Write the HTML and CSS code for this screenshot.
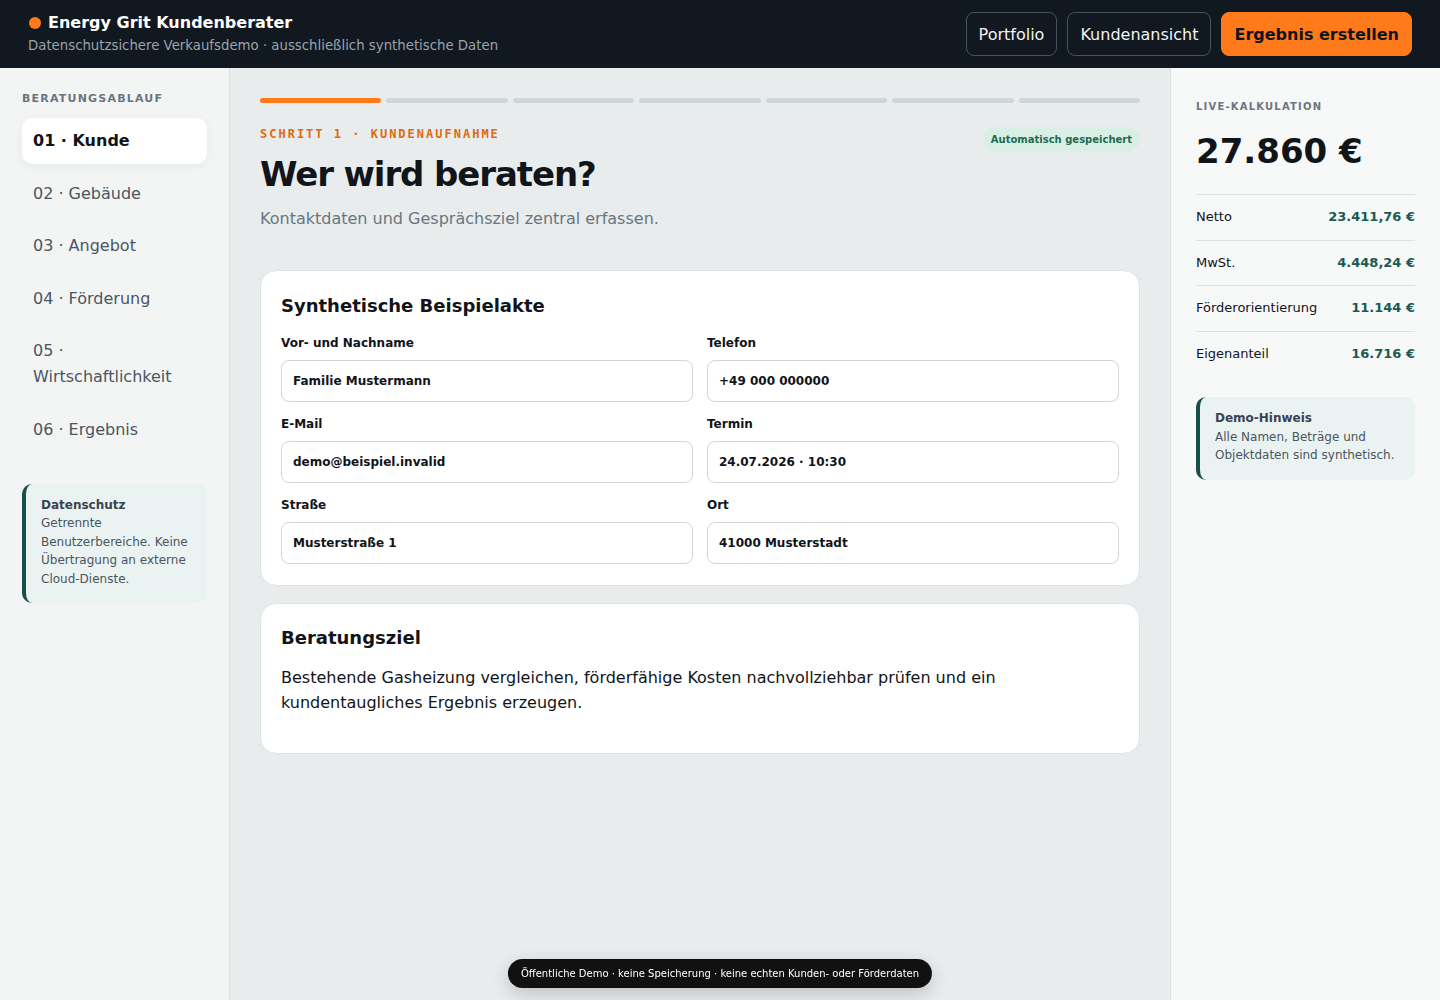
FILE: index.html
```html
<!DOCTYPE html>
<html lang="de">
<head>
<meta charset="utf-8">
<title>Energy Grit Kundenberater</title>
<link rel="stylesheet" href="styles.css">
</head>
<body>
<header class="topbar">
  <div class="brand">
    <div class="brand-title"><span class="dot"></span>Energy Grit Kundenberater</div>
    <div class="brand-sub">Datenschutzsichere Verkaufsdemo · ausschließlich synthetische Daten</div>
  </div>
  <nav class="top-actions">
    <button class="btn btn-ghost">Portfolio</button>
    <button class="btn btn-ghost">Kundenansicht</button>
    <button class="btn btn-primary">Ergebnis erstellen</button>
  </nav>
</header>
<div class="layout">
  <aside class="sidebar">
    <div class="eyebrow">BERATUNGSABLAUF</div>
    <ul class="steps">
      <li class="step active">01 · Kunde</li>
      <li class="step">02 · Gebäude</li>
      <li class="step">03 · Angebot</li>
      <li class="step">04 · Förderung</li>
      <li class="step">05 · Wirtschaftlichkeit</li>
      <li class="step">06 · Ergebnis</li>
    </ul>
    <div class="note">
      <strong>Datenschutz</strong>
      <span>Getrennte Benutzerbereiche. Keine Übertragung an externe Cloud-Dienste.</span>
    </div>
  </aside>
  <main class="main">
    <div class="progress">
      <span class="seg on"></span><span class="seg"></span><span class="seg"></span><span class="seg"></span><span class="seg"></span><span class="seg"></span><span class="seg"></span>
    </div>
    <div class="page-head">
      <div>
        <div class="kicker">SCHRITT 1 · KUNDENAUFNAHME</div>
        <h1>Wer wird beraten?</h1>
        <p class="lead">Kontaktdaten und Gesprächsziel zentral erfassen.</p>
      </div>
      <span class="badge">Automatisch gespeichert</span>
    </div>
    <section class="card card-form">
      <h2>Synthetische Beispielakte</h2>
      <div class="form-grid">
        <label class="field"><span>Vor- und Nachname</span><input value="Familie Mustermann"></label>
        <label class="field"><span>Telefon</span><input value="+49 000 000000"></label>
        <label class="field"><span>E-Mail</span><input value="demo@beispiel.invalid"></label>
        <label class="field"><span>Termin</span><input value="24.07.2026 · 10:30"></label>
        <label class="field"><span>Straße</span><input value="Musterstraße 1"></label>
        <label class="field"><span>Ort</span><input value="41000 Musterstadt"></label>
      </div>
    </section>
    <section class="card">
      <h2>Beratungsziel</h2>
      <p class="goal">Bestehende Gasheizung vergleichen, förderfähige Kosten nachvollziehbar prüfen und ein kundentaugliches Ergebnis erzeugen.</p>
    </section>
  </main>
  <aside class="calc">
    <div class="eyebrow small">LIVE-KALKULATION</div>
    <div class="total">27.860 €</div>
    <dl class="rows">
      <div class="row"><dt>Netto</dt><dd>23.411,76 €</dd></div>
      <div class="row"><dt>MwSt.</dt><dd>4.448,24 €</dd></div>
      <div class="row"><dt>Förderorientierung</dt><dd>11.144 €</dd></div>
      <div class="row"><dt>Eigenanteil</dt><dd>16.716 €</dd></div>
    </dl>
    <div class="note">
      <strong>Demo-Hinweis</strong>
      <span>Alle Namen, Beträge und Objektdaten sind synthetisch.</span>
    </div>
  </aside>
</div>
<div class="toast">Öffentliche Demo · keine Speicherung · keine echten Kunden- oder Förderdaten</div>
</body>
</html>
```

FILE: styles.css
```css
* { box-sizing: border-box; }
html, body { margin: 0; padding: 0; }
body {
  font-family: "DejaVu Sans", Verdana, sans-serif;
  color: #111418;
  background: #e8ecec;
  min-height: 100vh;
}
.topbar {
  height: 68px;
  background: #111820;
  display: flex;
  align-items: center;
  justify-content: space-between;
  padding: 0 28px;
}
.brand-title {
  color: #ffffff;
  font-weight: bold;
  font-size: 16px;
  line-height: 22px;
  display: flex;
  align-items: center;
}
.dot {
  width: 12px;
  height: 12px;
  border-radius: 50%;
  background: #ff7a1a;
  margin: 0 7px 0 1px;
}
.brand-sub {
  color: #9aa3ad;
  font-size: 13.3px;
  line-height: 20px;
  margin-top: 2px;
}
.top-actions { display: flex; gap: 10px; }
.btn {
  font-family: inherit;
  font-size: 16px;
  height: 44px;
  padding: 0 12px;
  border-radius: 8px;
  cursor: pointer;
}
.btn-ghost {
  background: transparent;
  color: #f1f3f5;
  border: 1px solid #48525c;
}
.btn-primary {
  background: #ff7a1a;
  color: #111418;
  border: 1px solid #ff7a1a;
  font-weight: bold;
  padding: 0 12px;
}
.layout {
  display: grid;
  grid-template-columns: 230px 1fr 270px;
  min-height: calc(100vh - 68px);
}
.sidebar {
  background: #f3f5f5;
  border-right: 1px solid #dde2e4;
  padding: 23px 22px 22px 22px;
}
.eyebrow {
  font-size: 11px;
  font-weight: bold;
  letter-spacing: 1.2px;
  color: #6b7580;
  line-height: 16px;
}
.eyebrow.small { font-size: 10px; }
.steps {
  list-style: none;
  margin: 11px 0 0 0;
  padding: 0;
  display: flex;
  flex-direction: column;
  gap: 6.5px;
}
.step {
  font-size: 16px;
  line-height: 26px;
  padding: 10px 11px;
  color: #4a5560;
  border-radius: 10px;
}
.step.active {
  background: #ffffff;
  color: #111418;
  font-weight: bold;
  box-shadow: 0 2px 8px rgba(20, 30, 40, 0.06);
}
.note {
  background: #eaf3f1;
  border-left: 4px solid #164e48;
  border-radius: 10px;
  padding: 12px 14px 15px 15px;
  font-size: 12px;
  line-height: 18.5px;
  color: #4a5560;
  display: flex;
  flex-direction: column;
}
.note strong { color: #3a4450; font-size: 12px; }
.sidebar .note { margin-top: 31px; }
.main {
  padding: 30px 30px 60px 30px;
}
.progress {
  display: flex;
  gap: 5px;
}
.seg {
  flex: 1;
  height: 5px;
  border-radius: 3px;
  background: #cfd6da;
}
.seg.on { background: #ff7a1a; }
.page-head {
  display: flex;
  justify-content: space-between;
  align-items: flex-start;
  margin-top: 24px;
}
.kicker {
  font-family: "DejaVu Sans Mono", monospace;
  font-weight: bold;
  font-size: 12px;
  letter-spacing: 2px;
  color: #e06a10;
  line-height: 14px;
}
h1 {
  margin: 12px 0 0 0;
  font-size: 34px;
  line-height: 43px;
  letter-spacing: -1.1px;
  font-weight: bold;
}
.lead {
  margin: 11px 0 0 0;
  font-size: 16px;
  line-height: 24px;
  color: #6b7580;
}
.badge {
  margin-top: 0;
  background: #d9efe6;
  color: #1f6b4f;
  font-size: 10px;
  font-weight: bold;
  height: 25px;
  line-height: 25px;
  padding: 0 8px;
  border-radius: 13px;
}
.card {
  background: #ffffff;
  border: 1px solid #dde3e6;
  border-radius: 16px;
  padding: 21px 20px 21px 20px;
  margin-top: 17px;
}
.card-form { padding: 22px 20px 21px 20px; }
.page-head + .card { margin-top: 39px; }
h2 {
  margin: 0;
  font-size: 18px;
  line-height: 26px;
  font-weight: bold;
}
.form-grid {
  margin-top: 15px;
  display: grid;
  grid-template-columns: 1fr 1fr;
  column-gap: 14px;
  row-gap: 13px;
}
.field { display: flex; flex-direction: column; }
.field span {
  font-size: 12px;
  line-height: 19px;
  font-weight: bold;
  margin-bottom: 7px;
}
.field input {
  font-family: inherit;
  font-size: 12px;
  font-weight: bold;
  color: #111418;
  height: 42px;
  padding: 0 11px;
  border: 1px solid #cfd6da;
  border-radius: 8px;
  background: #ffffff;
}
.goal {
  margin: 14px 0 17px 0;
  font-size: 16px;
  line-height: 25px;
  max-width: 740px;
}
.calc {
  background: #f7f8f8;
  border-left: 1px solid #dde2e4;
  padding: 31px 25px;
}
.total {
  font-size: 34px;
  font-weight: bold;
  line-height: 40px;
  margin-top: 16px;
}
.rows {
  margin: 23px 0 0 0;
}
.row {
  display: flex;
  justify-content: space-between;
  border-top: 1px solid #dde2e4;
  padding: 13px 0 14.5px 0;
  font-size: 13px;
  line-height: 17px;
}
.row dt { color: #111418; }
.row dd { margin: 0; font-weight: bold; color: #1a5a50; }
.calc .note { margin-top: 21px; }
.toast {
  position: fixed;
  left: 50%;
  bottom: 12px;
  transform: translateX(-50%);
  background: #111111;
  color: #ffffff;
  font-size: 10px;
  height: 29px;
  line-height: 29px;
  padding: 0 13px;
  border-radius: 15px;
  white-space: nowrap;
  box-shadow: 0 6px 18px rgba(0, 0, 0, 0.18);
}
```
